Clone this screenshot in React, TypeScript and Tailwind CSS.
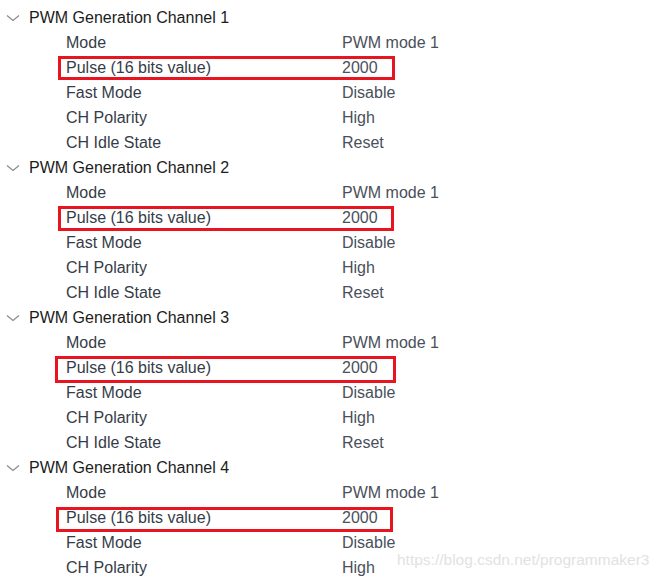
import React from "react";

type Box = { l: number; r: number; t: number; b: number };

const channels: { n: number; box: Box }[] = [
  { n: 1, box: { l: -8, r: 395, t: -12, b: 12 } },
  { n: 2, box: { l: -8, r: 394, t: -12, b: 13 } },
  { n: 3, box: { l: -11, r: 396, t: -12, b: 15 } },
  { n: 4, box: { l: -10, r: 393, t: -11, b: 14 } },
];

const rows = [
  ["Mode", "PWM mode 1"],
  ["Pulse (16 bits value)", "2000"],
  ["Fast Mode", "Disable"],
  ["CH Polarity", "High"],
  ["CH Idle State", "Reset"],
];

function Chevron() {
  return (
    <svg width="14" height="8" viewBox="0 0 14 8" className="shrink-0">
      <path d="M1 1.5 L7 6.5 L13 1.5" fill="none" stroke="#8a8a8a" strokeWidth="1.2" />
    </svg>
  );
}

export default function App() {
  return (
    <div
      className="relative w-[659px] h-[577px] overflow-hidden bg-white pt-[5px]"
      style={{ fontFamily: '"Liberation Sans", Arial, sans-serif' }}
    >
      {channels.map((ch) => (
        <div key={ch.n}>
          <div className="flex items-center h-[25px] text-[16px] text-[#1c1c1c]">
            <div className="w-[29px] flex justify-start pl-[6px]">
              <Chevron />
            </div>
            <span>PWM Generation Channel {ch.n}</span>
          </div>
          {rows.map(([label, value], i) => (
            <div
              key={label}
              className="relative flex items-center h-[25px] text-[16px] text-[#363c47]"
            >
              <span className="w-[342px] pl-[66px] shrink-0">{label}</span>
              <span className="text-[#4a505a]">{value}</span>
              {i === 1 && (
                <div
                  className="absolute border-[3px] border-[#e8141f]"
                  style={{
                    left: 66 + ch.box.l,
                    width: ch.box.r - (66 + ch.box.l),
                    top: 12.5 + ch.box.t,
                    height: ch.box.b - ch.box.t,
                  }}
                />
              )}
            </div>
          ))}
        </div>
      ))}
      <div className="absolute left-[397px] top-[548px] text-[15.5px] text-[#e2e2e2] whitespace-nowrap">
        https://blog.csdn.net/programmaker3
      </div>
    </div>
  );
}
